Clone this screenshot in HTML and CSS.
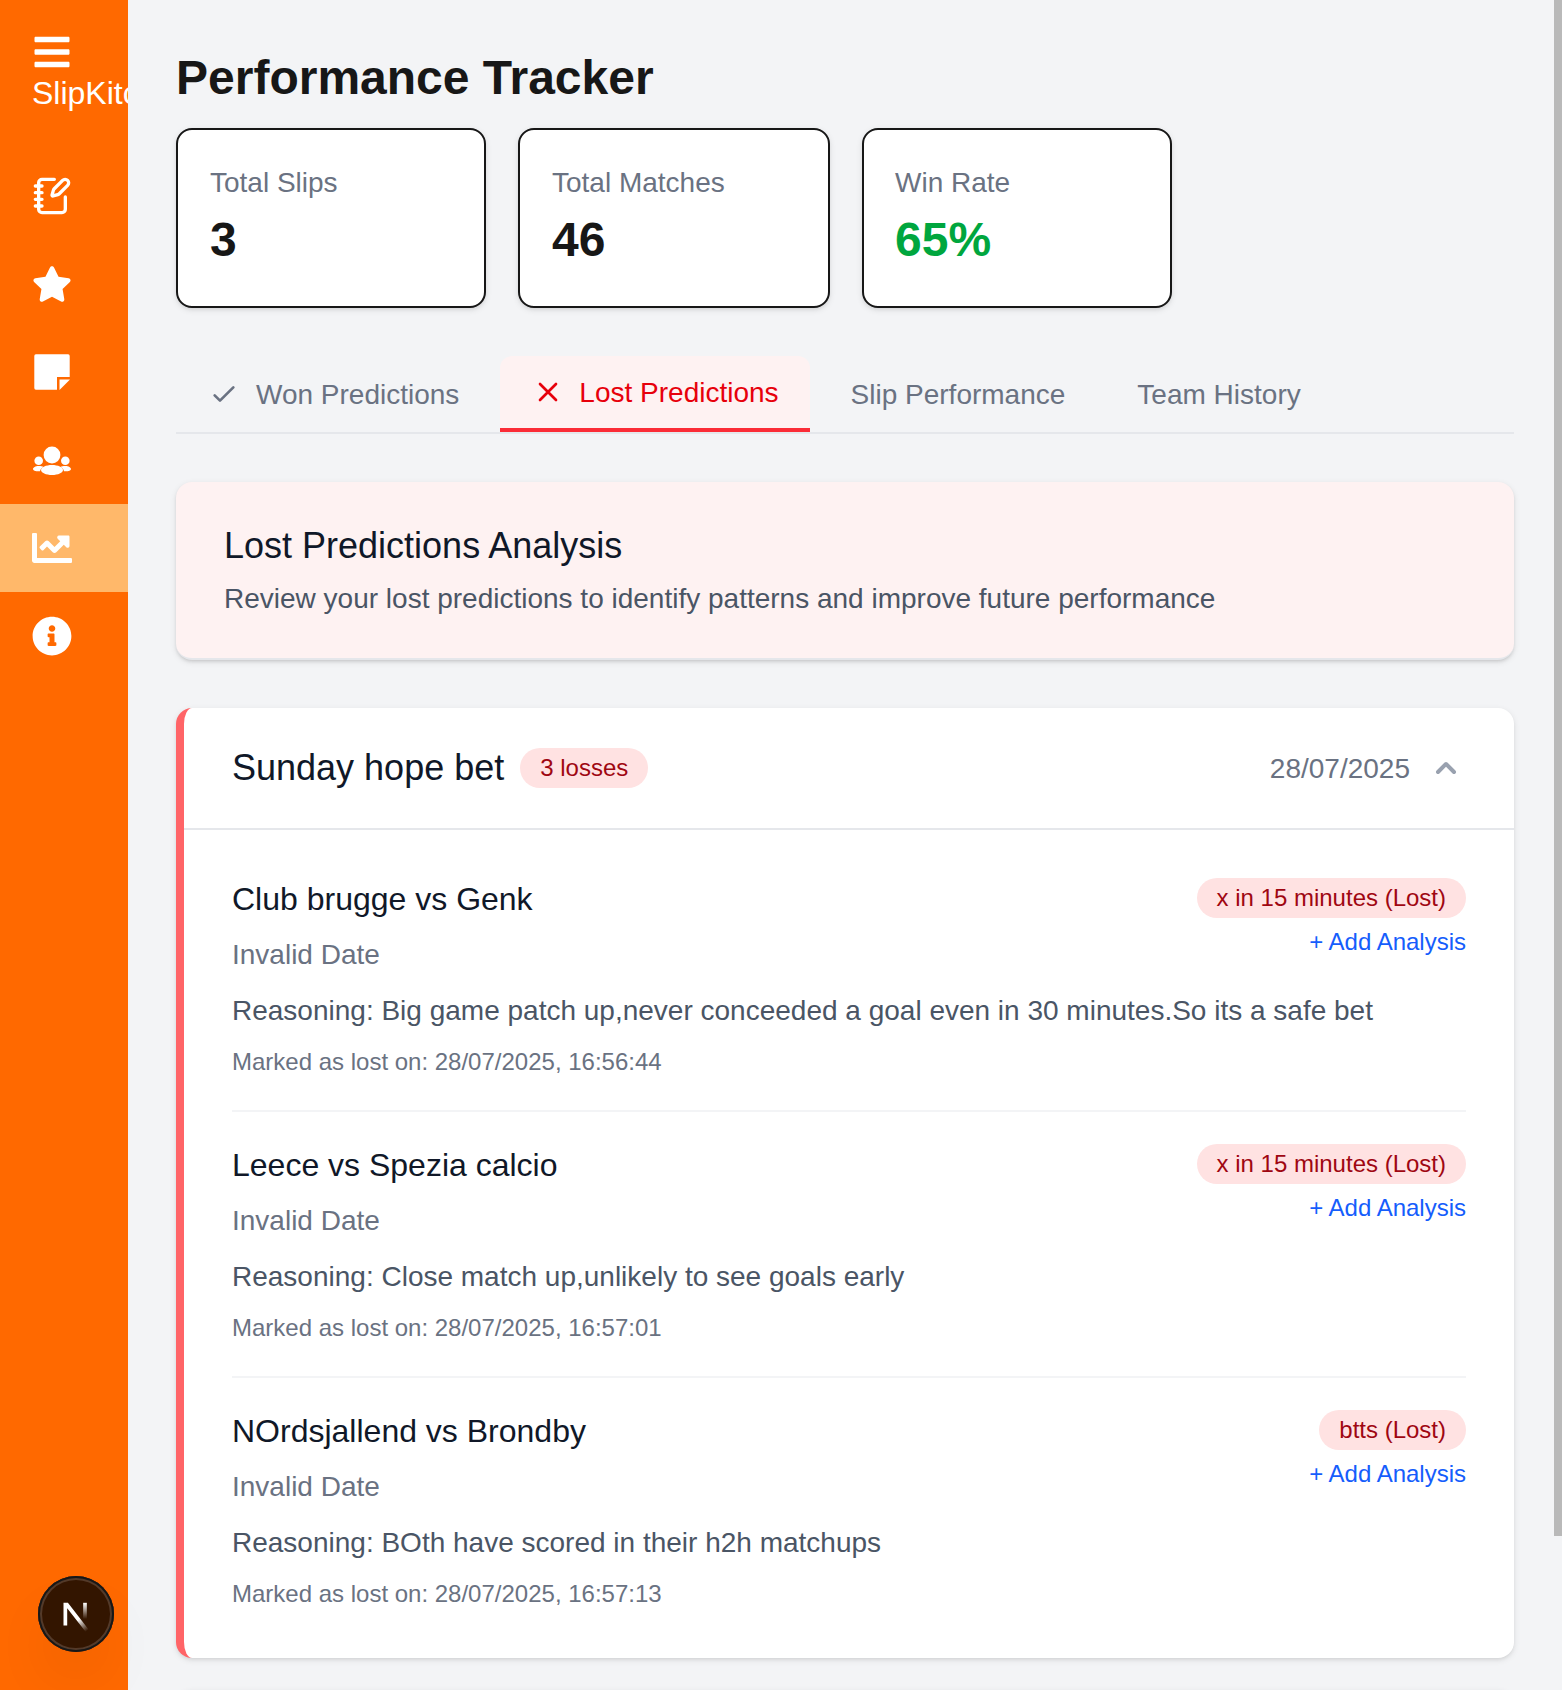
FILE: index.html
```html
<!DOCTYPE html>
<html lang="en">
<head>
<meta charset="utf-8">
<title>SlipKitchen - Performance Tracker</title>
<link rel="stylesheet" href="styles.css">
</head>
<body>
<div class="app">
  <aside class="sidebar">
    <div class="brand">
      <svg class="icon" viewBox="0 0 448 512"><path d="M16 132h416c8.837 0 16-7.163 16-16V76c0-8.837-7.163-16-16-16H16C7.163 60 0 67.163 0 76v40c0 8.837 7.163 16 16 16zm0 160h416c8.837 0 16-7.163 16-16v-40c0-8.837-7.163-16-16-16H16c-8.837 0-16 7.163-16 16v40c0 8.837 7.163 16 16 16zm0 160h416c8.837 0 16-7.163 16-16v-40c0-8.837-7.163-16-16-16H16c-8.837 0-16 7.163-16 16v40c0 8.837 7.163 16 16 16z"/></svg>
      <span class="brand-name">SlipKitchen</span>
    </div>
    <nav class="nav">
      <a class="nav-item"><svg class="icon line" viewBox="0 0 24 24"><path d="M13.4 2H6a2 2 0 0 0-2 2v16a2 2 0 0 0 2 2h12a2 2 0 0 0 2-2v-7.4M2 6h4M2 10h4M2 14h4M2 18h4"/><path d="M21.378 5.626a1 1 0 1 0-3.004-3.004l-5.01 5.012a2 2 0 0 0-.506.854l-.837 2.87a.5.5 0 0 0 .62.62l2.87-.837a2 2 0 0 0 .854-.506z"/></svg></a>
      <a class="nav-item"><svg class="icon" viewBox="0 0 576 512"><path d="M259.3 17.8L194 150.2 47.9 171.5c-26.2 3.8-36.7 36.1-17.7 54.6l105.7 103-25 145.5c-4.5 26.3 23.2 46 46.4 33.7L288 439.6l130.7 68.7c23.2 12.2 50.9-7.4 46.4-33.7l-25-145.5 105.7-103c19-18.5 8.5-50.8-17.7-54.6L382 150.2 316.7 17.8c-11.7-23.6-45.6-23.9-57.4 0z"/></svg></a>
      <a class="nav-item"><svg class="icon" viewBox="0 0 40 40"><path d="M3.9 2.300h32.200q1.600 0 1.600 1.600V25H25v12.700H3.900q-1.600 0-1.600-1.600V3.900q0-1.600 1.600-1.600z"/><path d="M27.500 27.500H38L27.500 38z"/></svg></a>
      <a class="nav-item"><svg class="icon" viewBox="0 0 40 40"><circle cx="20" cy="15" r="8.4"/><circle cx="6.7" cy="20.8" r="4.3"/><circle cx="33.3" cy="20.8" r="4.3"/><path d="M20 25c6 0 11 2.300 11 5s-5 5-11 5-11-2.300-11-5 5-5 11-5z"/><path d="M6.500 26c2.500 0 4 .4 5 1-2 1-3.200 2.200-3.500 4.300C3.500 31.500 1 30.500 1 29s2.500-3 5.500-3zM33.500 26c-2.500 0-4 .4-5 1 2 1 3.200 2.200 3.500 4.300 4.500.2 7-.8 7-2.300s-2.500-3-5.500-3z"/></svg></a>
      <a class="nav-item active"><svg class="icon" viewBox="0 0 512 512"><path d="M496 384H64V80c0-8.840-7.160-16-16-16H16C7.160 64 0 71.160 0 80v336c0 17.670 14.330 32 32 32h464c8.840 0 16-7.160 16-16v-32c0-8.840-7.160-16-16-16zM464 96H345.940c-21.380 0-32.090 25.850-16.970 40.970l32.400 32.400L288 242.750l-73.370-73.370c-12.500-12.500-32.760-12.500-45.250 0l-68.690 68.690c-6.250 6.250-6.250 16.380 0 22.630l22.620 22.620c6.250 6.250 16.380 6.250 22.630 0L192 237.250l73.370 73.370c12.500 12.500 32.760 12.500 45.250 0l96-96 32.400 32.400c15.120 15.120 40.970 4.410 40.970-16.970V112c.01-8.840-7.150-16-15.990-16z"/></svg></a>
      <a class="nav-item"><svg class="icon" viewBox="0 0 512 512"><path d="M256 8C119.043 8 8 119.083 8 256c0 136.997 111.043 248 248 248s248-111.003 248-248C504 119.083 392.957 8 256 8zm0 110c23.196 0 42 18.804 42 42s-18.804 42-42 42-42-18.804-42-42 18.804-42 42-42zm56 254c0 6.627-5.373 12-12 12h-88c-6.627 0-12-5.373-12-12v-24c0-6.627 5.373-12 12-12h12v-64h-12c-6.627 0-12-5.373-12-12v-24c0-6.627 5.373-12 12-12h64c6.627 0 12 5.373 12 12v100h12c6.627 0 12 5.373 12 12v24z"/></svg></a>
    </nav>
  </aside>

  <main class="main">
    <h1 class="page-title">Performance Tracker</h1>
    <section class="stats">
      <div class="stat"><p class="stat-label">Total Slips</p><p class="stat-value">3</p></div>
      <div class="stat"><p class="stat-label">Total Matches</p><p class="stat-value">46</p></div>
      <div class="stat"><p class="stat-label">Win Rate</p><p class="stat-value green">65%</p></div>
    </section>

    <div class="tabs">
      <button class="tab"><svg class="tab-icon" viewBox="0 0 24 24"><path d="M5 13l4 4L19 7"/></svg><span class="tab-label">Won Predictions</span></button>
      <button class="tab selected"><svg class="tab-icon" viewBox="0 0 24 24"><path d="M18 6 6 18M6 6l12 12"/></svg><span class="tab-label">Lost Predictions</span></button>
      <button class="tab"><span class="tab-label">Slip Performance</span></button>
      <button class="tab"><span class="tab-label">Team History</span></button>
    </div>

    <section class="intro">
      <h2 class="heading">Lost Predictions Analysis</h2>
      <p class="intro-text">Review your lost predictions to identify patterns and improve future performance</p>
    </section>

    <div class="slips">
      <section class="slip">
        <header class="slip-head">
          <div class="slip-name"><h3 class="heading">Sunday hope bet</h3><span class="badge">3 losses</span></div>
          <div class="slip-date"><span class="date-text">28/07/2025</span><svg class="chevron" viewBox="0 0 20 20"><path d="M14.707 12.707a1 1 0 01-1.414 0L10 9.414l-3.293 3.293a1 1 0 01-1.414-1.414l4-4a1 1 0 011.414 0l4 4a1 1 0 010 1.414z"/></svg></div>
        </header>
        <div class="matches">
          <article class="match">
            <div class="match-info">
              <h4 class="match-title">Club brugge vs Genk</h4>
              <p class="match-date">Invalid Date</p>
              <p class="reason">Reasoning: Big game patch up,never conceeded a goal even in 30 minutes.So its a safe bet</p>
              <p class="marked">Marked as lost on: 28/07/2025, 16:56:44</p>
            </div>
            <div class="match-side"><span class="badge">x in 15 minutes (Lost)</span><a class="add">+ Add Analysis</a></div>
          </article>
          <article class="match">
            <div class="match-info">
              <h4 class="match-title">Leece vs Spezia calcio</h4>
              <p class="match-date">Invalid Date</p>
              <p class="reason">Reasoning: Close match up,unlikely to see goals early</p>
              <p class="marked">Marked as lost on: 28/07/2025, 16:57:01</p>
            </div>
            <div class="match-side"><span class="badge">x in 15 minutes (Lost)</span><a class="add">+ Add Analysis</a></div>
          </article>
          <article class="match">
            <div class="match-info">
              <h4 class="match-title">NOrdsjallend vs Brondby</h4>
              <p class="match-date">Invalid Date</p>
              <p class="reason">Reasoning: BOth have scored in their h2h matchups</p>
              <p class="marked">Marked as lost on: 28/07/2025, 16:57:13</p>
            </div>
            <div class="match-side"><span class="badge">btts (Lost)</span><a class="add">+ Add Analysis</a></div>
          </article>
        </div>
      </section>
      <section class="slip next-slip"></section>
    </div>
  </main>
  <div class="scroll-thumb"></div>
  <div class="dev-button">
    <svg viewBox="0 0 76 76">
      <defs>
        <linearGradient id="fade-diag" gradientUnits="userSpaceOnUse" x1="41" y1="43" x2="49.500" y2="54.500"><stop stop-color="#fff"/><stop offset="1" stop-color="#fff" stop-opacity="0"/></linearGradient>
        <linearGradient id="fade-bar" gradientUnits="userSpaceOnUse" x1="47" y1="27" x2="47" y2="43"><stop stop-color="#fff"/><stop offset="1" stop-color="#fff" stop-opacity="0"/></linearGradient>
      </defs>
      <path d="M25.500 26.800h4.400L50.600 53.600 47.800 56 29.200 32.200V49.400h-3.700z" fill="url(#fade-diag)"/>
      <path d="M47 26.800V43" stroke="url(#fade-bar)" stroke-width="3.700"/>
    </svg>
  </div>
</div>
</body>
</html>
```
FILE: styles.css
```css
* { box-sizing: border-box; margin: 0; padding: 0; }
body {
  font-family: "Liberation Sans", Arial, sans-serif;
  background: #f3f4f6;
  color: #171717;
  overflow: hidden;
}
h1, h2, h3, h4 { font-weight: 400; }
.app { position: relative; display: flex; height: 1690px; overflow: hidden; }

.sidebar { width: 128px; flex: none; background: #ff6900; color: #fff; overflow: hidden; }
.brand { display: flex; flex-direction: column; height: 152px; padding: 32px 0 0 32px; }
.brand-name { font-size: 32px; line-height: 42px; white-space: nowrap; }
.icon { display: block; width: 40px; height: 40px; fill: currentColor; }
.icon.line { fill: none; stroke: currentColor; stroke-width: 2; stroke-linecap: round; stroke-linejoin: round; }
.nav-item { display: flex; align-items: center; height: 88px; padding-left: 32px; }
.nav-item.active { background: #ffb86a; }

.main { flex: 1; min-width: 0; padding: 48px 48px 0; }
.page-title { font-size: 48px; font-weight: 700; line-height: 59px; margin-bottom: 21px; }

.stats { display: grid; grid-template-columns: 310px 312px 310px; gap: 32px; }
.stat {
  height: 180px;
  padding: 32px;
  border: 2px solid #171717;
  border-radius: 16px;
  background: #fff;
  box-shadow: 0 2px 6px rgba(0, 0, 0, .1), 0 2px 4px -2px rgba(0, 0, 0, .1);
}
.stat:last-child { padding-left: 31px; }
.stat-label { font-size: 28px; line-height: 41px; color: #6a7282; }
.stat-value { margin-top: 7px; font-size: 48px; font-weight: 700; line-height: 59px; }
.green { color: #00a63e; }

.tabs { display: flex; gap: 8px; height: 78px; margin-top: 48px; border-bottom: 2px solid #e5e7eb; }
.tab {
  display: flex;
  align-items: center;
  gap: 16px;
  padding: 0 32px;
  border: 0;
  background: none;
  color: #6a7282;
  font: 28px/40px "Liberation Sans", Arial, sans-serif;
  white-space: nowrap;
}
.tab.selected {
  gap: 15px;
  margin: 0 1px;
  padding: 0 31px 0 32px;
  background: #fef2f2;
  color: #e7000b;
  border-bottom: 4px solid #fb2c36;
  border-radius: 12px 12px 0 0;
}
.tab-label, .date-text { padding-top: 2px; }
.tab-icon { width: 32px; height: 32px; fill: none; stroke: currentColor; stroke-width: 2; stroke-linecap: round; stroke-linejoin: round; }

.heading { font-size: 36px; line-height: 48px; color: #101828; }
.intro {
  margin-top: 48px;
  padding: 40px 48px 39px;
  border-bottom: 2px solid #e5e7eb;
  border-radius: 16px;
  background: #fef2f2;
  box-shadow: 0 2px 6px rgba(0, 0, 0, .1), 0 2px 4px -2px rgba(0, 0, 0, .2);
}
.intro-text { margin-top: 8px; font-size: 28px; line-height: 41px; color: #4a5565; }

.slips { display: flex; flex-direction: column; gap: 32px; margin-top: 48px; }
.slip {
  border-left: 8px solid #ff6467;
  border-radius: 16px;
  background: #fff;
  box-shadow: 0 2px 6px rgba(0, 0, 0, .1), 0 2px 4px -2px rgba(0, 0, 0, .1);
}
.next-slip { height: 120px; }
.slip-head { display: flex; align-items: center; justify-content: space-between; padding: 36px 48px; border-bottom: 2px solid #e5e7eb; }
.slip-name { display: flex; align-items: center; gap: 16px; }
.slip-date { display: flex; align-items: center; gap: 16px; font-size: 28px; line-height: 40px; color: #6a7282; }
.chevron { width: 40px; height: 40px; fill: #99a1af; }
.badge { padding: 4px 20px; border-radius: 20px; background: #ffe2e2; color: #9f0712; font-size: 24px; line-height: 32px; white-space: nowrap; }

.matches { padding: 16px 48px; }
.match { display: flex; justify-content: space-between; padding: 32px 0; }
.match + .match { border-top: 2px solid #f3f4f6; }
.match-info { white-space: nowrap; }
.match-title { font-size: 32px; line-height: 42px; color: #101828; }
.match-date { margin-top: 14px; font-size: 28px; line-height: 41px; color: #6a7282; }
.reason { margin-top: 15px; font-size: 28px; line-height: 41px; color: #4a5565; }
.marked { margin-top: 15px; font-size: 24px; line-height: 32px; color: #6a7282; }
.match-side { display: flex; flex-direction: column; align-items: flex-end; gap: 8px; width: 0; }
.add { font-size: 24px; line-height: 32px; color: #155dfc; white-space: nowrap; }

.scroll-thumb { position: absolute; top: 0; right: 0; width: 8px; height: 1536px; background: #b9b9b9; }
.dev-button {
  position: absolute;
  left: 38px;
  top: 1576px;
  width: 76px;
  height: 76px;
  border-radius: 50%;
  background: #331500;
  box-shadow: inset 0 0 0 2px #171717, inset 0 0 0 4px #543a29, 0 32px 64px -16px rgba(0, 0, 0, .14);
}
.dev-button svg { display: block; width: 76px; height: 76px; }
```
